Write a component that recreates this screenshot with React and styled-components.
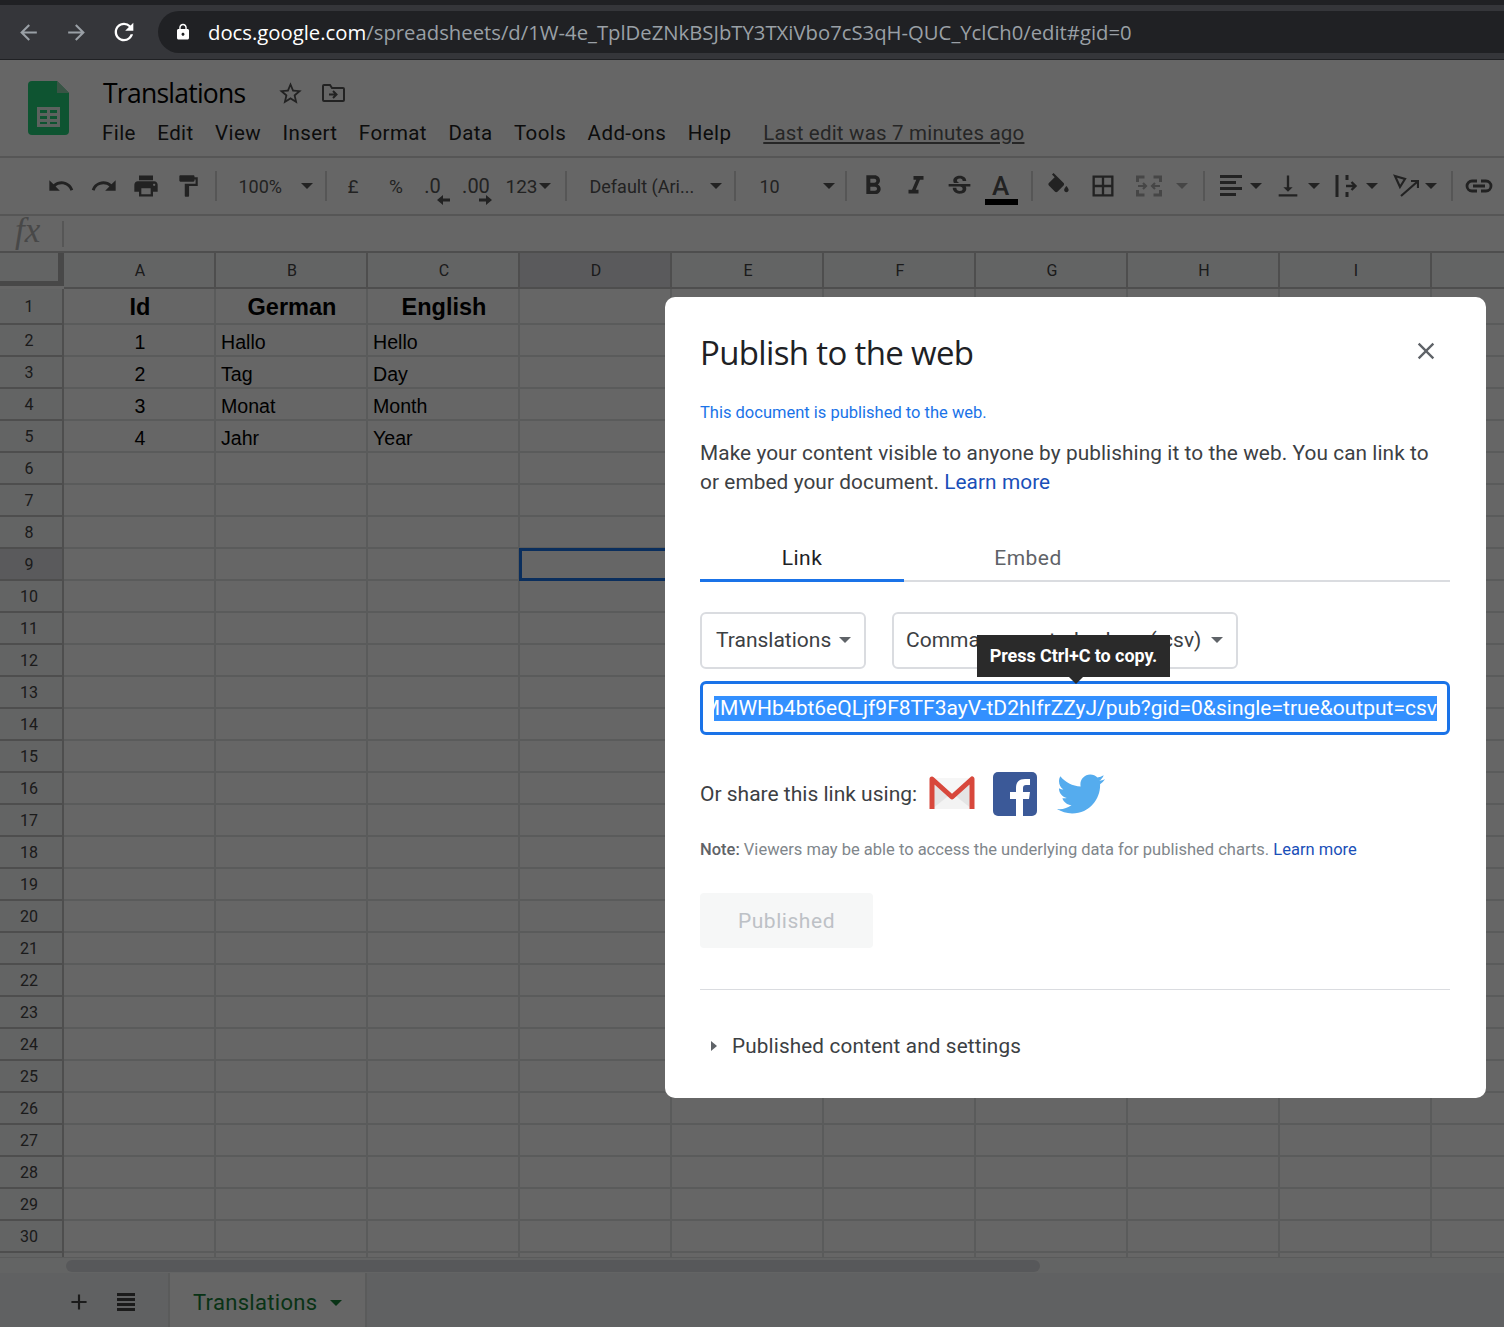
import React from 'react';
import styled, { createGlobalStyle } from 'styled-components';
import {
  MdArrowBack, MdArrowForward, MdRefresh, MdLock, MdUndo, MdRedo, MdPrint, MdFormatPaint,
  MdFormatBold, MdFormatItalic, MdStrikethroughS, MdBorderAll,
  MdVerticalAlignBottom, MdStarBorder, MdClose, MdAdd,
} from 'react-icons/md';
import { FaTwitter } from 'react-icons/fa';

const GlobalStyle = createGlobalStyle`
html, body { margin: 0; padding: 0; background: #666; overflow: hidden; }
* { box-sizing: border-box; }
`;

const Page = styled.div`
position: relative;
width: 1504px;
height: 1327px;
overflow: hidden;
display: flex;
flex-direction: column;
font-family: Roboto, sans-serif;
`;

/* browser chrome */
const BrowserBar = styled.div`
height: 60px;
flex-shrink: 0;
background: #35363a;
border-top: 5px solid #202124;
border-bottom: 1px solid #202124;
display: flex;
align-items: center;
padding-left: 4px;
`;
const NavButton = styled.div`
width: 48px;
display: flex;
justify-content: center;
color: ${(props) => props.color};
margin-left: ${(props) => props.$ml || 0}px;
`;
const UrlPill = styled.div`
flex: 1;
height: 42px;
margin-left: 10px;
background: #202124;
border-radius: 21px 0 0 21px;
display: flex;
align-items: center;
padding-left: 16px;
font-family: 'Open Sans', Roboto, sans-serif;
font-size: 20.3px;
color: #9aa0a6;
white-space: nowrap;
`;
const UrlHost = styled.span`
color: #fff;
margin-left: 16px;
`;

/* sheets header */
const DocHeader = styled.div`
height: 98px;
flex-shrink: 0;
background: #fff;
border-bottom: 2px solid #d8d8d8;
display: flex;
padding: 21px 0 0 28px;
`;
const DocTitleBlock = styled.div`
margin-left: 33px;
display: flex;
flex-direction: column;
`;
const TitleRow = styled.div`
display: flex;
align-items: center;
height: 24px;
margin-left: 1px;
`;
const DocTitle = styled.div`
font-family: 'Open Sans', Roboto, sans-serif;
font-size: 26.5px;
letter-spacing: -0.75px;
color: #000;
width: 174px;
`;
const MenuRow = styled.div`
display: flex;
align-items: center;
gap: 21.4px;
margin-top: 16px;
font-size: 20.5px;
letter-spacing: 0.42px;
color: #222;
`;
const LastEdit = styled.div`
margin-left: 10.5px;
color: #5f5f5f;
text-decoration: underline;
letter-spacing: 0.2px;
`;

/* toolbar */
const Toolbar = styled.div`
height: 58px;
flex-shrink: 0;
background: #fff;
border-bottom: 2px solid #d8d8d8;
display: flex;
align-items: center;
padding-left: 40px;
color: #555;
`;
const ToolButton = styled.div`
position: relative;
width: ${(props) => props.$w || 42.5}px;
height: 32px;
margin-left: ${(props) => props.$ml || 0}px;
display: flex;
align-items: center;
justify-content: center;
flex-shrink: 0;
font-size: ${(props) => props.$fs || 19}px;
font-weight: ${(props) => props.$fw || 400};
color: #555;
`;
const ToolSelect = styled.div`
width: ${(props) => props.$w}px;
padding: 0 ${(props) => props.$pr}px 0 ${(props) => props.$pl}px;
height: 32px;
display: flex;
align-items: center;
justify-content: space-between;
flex-shrink: 0;
font-size: 18px;
color: #555;
`;
const Sep = styled.div`
width: 2px;
height: 30px;
flex-shrink: 0;
background: #d8d8d8;
margin-left: ${(props) => props.$ml || 0}px;
`;
const Caret = styled.span`
width: 0;
height: 0;
flex-shrink: 0;
border-left: ${(props) => props.$s || 6}px solid transparent;
border-right: ${(props) => props.$s || 6}px solid transparent;
border-top: ${(props) => props.$s || 6}px solid ${(props) => props.color || '#555'};
margin-left: ${(props) => props.$ml || 0}px;
`;
const ColorBar = styled.div`
position: absolute;
left: 5px;
right: 4px;
bottom: -3px;
height: 6px;
background: #000;
`;
const DecimalArrow = styled.svg`
position: absolute;
bottom: -3px;
right: ${(props) => props.$r}px;
`;

/* formula bar */
const FormulaBar = styled.div`
height: 37px;
flex-shrink: 0;
background: #fff;
border-bottom: 2px solid #c4c4c4;
display: flex;
align-items: center;
`;
const FxLabel = styled.div`
width: 64px;
padding-left: 15px;
font-family: 'Liberation Serif', serif;
font-style: italic;
font-size: 35px;
color: #b4b4b4;
border-right: 2px solid #d8d8d8;
height: 26px;
line-height: 19px;
`;

/* grid */
const Grid = styled.div`
height: 1004px;
flex-shrink: 0;
overflow: hidden;
background: #fff;
`;
const GridRow = styled.div`
display: grid;
grid-template-columns: 64px repeat(10, 152px);
height: ${(props) => props.$h}px;
`;
const Corner = styled.div`
background: #f8f9fa;
border-right: 6px solid #b4b4b4;
border-bottom: 5px solid #b4b4b4;
height: 33px;
`;
const ColHeader = styled.div`
background: ${(props) => props.$active ? '#e0e2e6' : '#f8f9fa'};
border-right: 2px solid #c4c4c4;
border-bottom: 2px solid #c4c4c4;
display: flex;
align-items: center;
justify-content: center;
padding: 1px 0 0 2px;
font-size: 16px;
color: #444;
`;
const RowHeader = styled.div`
background: ${(props) => props.$active ? '#e0e2e6' : '#f8f9fa'};
border-right: 2px solid #c4c4c4;
border-bottom: 2px solid #c4c4c4;
display: flex;
align-items: center;
justify-content: center;
padding: 1px 4px 0 0;
font-size: 16px;
color: #444;
`;
const Cell = styled.div`
position: relative;
border-right: 2px solid #e2e3e3;
border-bottom: 2px solid #e2e3e3;
display: flex;
align-items: center;
padding: ${(props) => props.$bold ? 3 : 5}px 5px 0 ${(props) => props.$center ? 7 : 5}px;
font-family: 'Liberation Sans', Arial, sans-serif;
font-size: ${(props) => props.$bold ? 23.5 : 19.6}px;
font-weight: ${(props) => props.$bold ? 700 : 400};
justify-content: ${(props) => props.$center ? 'center' : 'flex-start'};
color: #000;
`;
const SelectedCell = styled.div`
position: absolute;
inset: -1px -2px -2px -1px;
border: 3px solid #1a73e8;
`;
const ScrollRow = styled.div`
height: 16px;
flex-shrink: 0;
background: #f8f9fa;
border-top: 1px solid #e2e3e3;
padding: 2px 0 0 66px;
`;
const ScrollThumb = styled.div`
width: 974px;
height: 12px;
border-radius: 6px;
background: #dadce0;
`;
const TabBar = styled.div`
flex: 1;
background: #f1f3f4;
display: flex;
align-items: stretch;
padding-left: 60px;
color: #444;
`;
const TabIcon = styled.div`
width: 37px;
margin-left: ${(props) => props.$ml || 0}px;
display: flex;
align-items: center;
justify-content: center;
padding-top: 4px;
`;
const SheetTab = styled.div`
margin-left: 24px;
width: 199px;
background: #fff;
border-left: 2px solid #e2e3e3;
border-right: 2px solid #e2e3e3;
display: flex;
align-items: center;
padding: 5px 0 0 23px;
gap: 13px;
font-size: 22px;
letter-spacing: 0.3px;
color: #188038;
`;

/* dialog */
const Overlay = styled.div`
position: absolute;
left: 0;
right: 0;
top: 60px;
bottom: 0;
background: rgba(0, 0, 0, 0.6);
`;
const Dialog = styled.div`
position: absolute;
left: 665px;
top: 297px;
width: 821px;
height: 801px;
background: #fff;
border-radius: 10px;
padding: 0 36px 0 35px;
display: flex;
flex-direction: column;
color: #3c4043;
`;
const DialogHead = styled.div`
display: flex;
align-items: center;
justify-content: space-between;
height: 38px;
margin-top: 36px;
`;
const DialogTitle = styled.div`
font-family: 'Open Sans', Roboto, sans-serif;
font-size: 33px;
letter-spacing: -0.65px;
color: #202124;
`;
const CloseBtn = styled.div`
display: flex;
margin: -2px 10px 0 0;
color: #5f6368;
`;
const PublishedNote = styled.div`
margin-top: 32px;
height: 20px;
line-height: 20px;
font-size: 16.5px;
color: #1a73e8;
`;
const Lead = styled.div`
margin-top: 16px;
font-size: 20.8px;
line-height: 29px;
letter-spacing: 0.08px;
color: #3c4043;
`;
const LinkText = styled.span`
color: ${(props) => props.color || '#1a4fb8'};
`;
const Tabs = styled.div`
margin-top: 37px;
height: 48px;
display: flex;
border-bottom: 2px solid #dadce0;
`;
const Tab = styled.div`
width: ${(props) => props.$w}px;
height: 48px;
display: flex;
align-items: center;
justify-content: center;
font-size: 21px;
letter-spacing: 0.45px;
color: ${(props) => props.$active ? '#202124' : '#5f6368'};
border-bottom: 3px solid ${(props) => props.$active ? '#1a73e8' : 'transparent'};
padding-top: 3px;
`;
const SelectRow = styled.div`
margin-top: 30px;
display: flex;
gap: 26px;
`;
const DropDown = styled.div`
width: ${(props) => props.$w}px;
height: 57px;
border: 2px solid #dadce0;
border-radius: 6px;
display: flex;
align-items: center;
justify-content: space-between;
padding: 0 13px 2px ${(props) => props.$pl}px;
font-size: 21px;
color: #3c4043;
white-space: nowrap;
`;
const Tooltip = styled.div`
position: absolute;
left: 312px;
top: 338px;
width: 193px;
height: 42px;
padding-bottom: 1px;
background: #2a2a2a;
color: #fff;
font-size: 18px;
font-weight: 700;
letter-spacing: -0.07px;
display: flex;
align-items: center;
justify-content: center;
&::after {
  content: '';
  position: absolute;
  left: 92px;
  top: 42px;
  border-left: 7px solid transparent;
  border-right: 7px solid transparent;
  border-top: 7px solid #2a2a2a;
}
`;
const LinkBox = styled.div`
margin-top: 12px;
height: 54px;
border: 3px solid #1a73e8;
border-radius: 6px;
padding: 0 10px 0 11px;
display: flex;
align-items: center;
justify-content: flex-end;
overflow: hidden;
`;
const SelectedUrl = styled.div`
height: 25px;
line-height: 25px;
width: 100%;
display: flex;
justify-content: flex-end;
overflow: hidden;
white-space: nowrap;
background: #3390ff;
color: #fff;
font-size: 21px;
`;
const ShareRow = styled.div`
margin-top: 36px;
height: 45px;
display: flex;
align-items: center;
font-size: 21px;
color: #3c4043;
`;
const ShareIcon = styled.div`
display: flex;
margin-left: ${(props) => props.$ml}px;
`;
const Note = styled.div`
margin-top: 24px;
height: 20px;
line-height: 20px;
font-size: 16.5px;
color: #80868b;
`;
const NoteLabel = styled.b`
font-weight: 500;
color: #5f6368;
`;
const PublishedButton = styled.div`
margin-top: 33px;
width: 173px;
height: 55px;
border-radius: 4px;
background: #f6f7f7;
color: #bdc1c6;
display: flex;
align-items: center;
justify-content: center;
font-size: 21px;
letter-spacing: 0.55px;
`;
const Divider = styled.div`
margin-top: 41px;
height: 1px;
background: #dadce0;
`;
const Disclosure = styled.div`
margin-top: 44px;
display: flex;
align-items: center;
font-size: 20.7px;
letter-spacing: 0.15px;
color: #3c4043;
padding-left: 11px;
gap: 15px;
`;
const SideCaret = styled.span`
width: 0;
height: 0;
border-top: 5px solid transparent;
border-bottom: 5px solid transparent;
border-left: 6px solid #5f6368;
`;

const COLS = ['A', 'B', 'C', 'D', 'E', 'F', 'G', 'H', 'I', ''];
const DATA = [
  ['1', 'Hallo', 'Hello'],
  ['2', 'Tag', 'Day'],
  ['3', 'Monat', 'Month'],
  ['4', 'Jahr', 'Year'],
];
const MENU = ['File', 'Edit', 'View', 'Insert', 'Format', 'Data', 'Tools', 'Add-ons', 'Help'];

const SheetsLogo = () => (
  <svg width="41" height="54" viewBox="0 0 41 54">
    <path d="M4 0h25l12 12v38a4 4 0 0 1-4 4H4a4 4 0 0 1-4-4V4a4 4 0 0 1 4-4z" fill="#23d27c" />
    <path d="M29 0l12 12H29z" fill="#8ed1ad" />
    <path d="M9 26h23v20H9zm3 3v3h7v-3zm10 0v3h7v-3zm-10 6v3h7v-3zm10 0v3h7v-3zm-10 6v2h7v-2zm10 0v2h7v-2z" fill="#e8f5ee" fillRule="evenodd" />
  </svg>
);
const FolderMove = () => (
  <svg width="24" height="20" viewBox="0 0 24 20" fill="none" stroke="#555" strokeWidth="2">
    <path d="M1 3a1 1 0 0 1 1-1h6l2 3h11a1 1 0 0 1 1 1v11a1 1 0 0 1-1 1H2a1 1 0 0 1-1-1z" />
    <path d="M7 11.5h7M11 8l3.5 3.5L11 15" strokeWidth="2" />
  </svg>
);
const FillIcon = () => (
  <svg width="27" height="27" viewBox="0 0 24 24" fill="#555">
    <path d="M16.56 8.94L7.62 0 6.21 1.41l2.38 2.38-5.15 5.15c-.59.59-.59 1.54 0 2.12l5.5 5.5c.29.29.68.44 1.06.44s.77-.15 1.06-.44l5.5-5.5c.59-.58.59-1.53 0-2.12z" />
    <path d="M19 11.5s-2 2.17-2 3.5c0 1.1.9 2 2 2s2-.9 2-2c0-1.33-2-3.5-2-3.5z" />
  </svg>
);
const AlignIcon = () => (
  <svg width="22" height="22" viewBox="0 0 22 22" fill="#555">
    <path d="M0 0h22v3H0zM0 6h16v3H0zM0 12h22v3H0zM0 18h16v3H0z" />
  </svg>
);
const MergeIcon = () => (
  <svg width="26" height="22" viewBox="0 0 26 22" fill="none" stroke="#b0b0b0" strokeWidth="3">
    <path d="M1.500 7V2h7M17.500 2h7v5M1.500 15v5h7M17.500 20h7v-5" />
    <path d="M2 11h8M7 8l3 3-3 3M24 11h-8M19 8l-3 3 3 3" strokeWidth="2.200" />
  </svg>
);
const WrapIcon = () => (
  <svg width="24" height="24" viewBox="0 0 24 24" fill="none" stroke="#555" strokeWidth="3">
    <path d="M3 1v22M13 1v5M13 18v5" />
    <path d="M12 12h9M17.500 8l4 4-4 4" strokeWidth="2.400" />
  </svg>
);
const RotateIcon = () => (
  <svg width="26" height="24" viewBox="0 0 26 24" fill="none" stroke="#555" strokeWidth="2.200">
    <path d="M2 2l10 3-5 8zM8 22L24 8M18 7h7v7" />
  </svg>
);
const LinkIcon = () => (
  <svg width="28" height="14" viewBox="0 0 28 14" fill="none" stroke="#555" strokeWidth="2.800">
    <path d="M12 2H7a5 5 0 0 0 0 10h5M16 2h5a5 5 0 0 1 0 10h-5M8 7h12" />
  </svg>
);
const SheetListIcon = () => (
  <svg width="20" height="18" viewBox="0 0 20 18" fill="#444">
    <path d="M1 0h18v3H1zM1 5h18v3H1zM1 10h18v3H1zM1 15h18v3H1z" />
  </svg>
);
const GmailIcon = () => (
  <svg width="46" height="35" viewBox="0 0 46 35">
    <path d="M3 2h40v31H3z" fill="#e4e4e4" />
    <path d="M3 33L23 17l20 16z" fill="#f3f3f3" />
    <path d="M3 2l20 17L43 2" fill="#f6f6f6" />
    <path d="M3 33V3l20 18L43 3v30" fill="none" stroke="#d8483c" strokeWidth="5" strokeLinejoin="round" />
  </svg>
);
const FacebookIcon = () => (
  <svg width="44" height="44" viewBox="0 0 44 44">
    <rect width="44" height="44" rx="5" fill="#3b5998" />
    <path d="M30 44V27h6l1-7h-7v-4c0-2 1-3 3-3h4V7h-5c-6 0-9 3-9 9v4h-6v7h6v17z" fill="#fff" />
  </svg>
);

const App = () => {
  const rows = [];
  for (let n = 1; n <= 31; n++) {
    const values = DATA[n - 2];
    rows.push(
      <GridRow key={n} $h={n === 1 ? 36 : 32}>
        <RowHeader $active={n === 9}>{n < 31 ? n : ''}</RowHeader>
        {COLS.map((c, i) => (
          <Cell
            key={i}
            $bold={n === 1}
            $center={n === 1 || (values && i === 0)}
          >
            {n === 1 ? ['Id', 'German', 'English'][i] : values ? values[i] : ''}
            {n === 9 && c === 'D' ? <SelectedCell /> : null}
          </Cell>
        ))}
      </GridRow>
    );
  }

  return (
    <Page>
      <GlobalStyle />
      <BrowserBar>
        <NavButton color="#9aa0a6"><MdArrowBack size={25} /></NavButton>
        <NavButton color="#9aa0a6"><MdArrowForward size={25} /></NavButton>
        <NavButton color="#fff"><MdRefresh size={28} /></NavButton>
        <UrlPill>
          <MdLock size={18} color="#fff" />
          <UrlHost>docs.google.com</UrlHost>/spreadsheets/d/1W-4e_TplDeZNkBSJbTY3TXiVbo7cS3qH-QUC_YclCh0/edit#gid=0
        </UrlPill>
      </BrowserBar>

      <DocHeader>
        <SheetsLogo />
        <DocTitleBlock>
          <TitleRow>
            <DocTitle>Translations</DocTitle>
            <MdStarBorder size={27} color="#555" />
            <NavButton $ml={6} color="#555"><FolderMove /></NavButton>
          </TitleRow>
          <MenuRow>
            {MENU.map((m) => <div key={m}>{m}</div>)}
            <LastEdit>Last edit was 7 minutes ago</LastEdit>
          </MenuRow>
        </DocTitleBlock>
      </DocHeader>

      <Toolbar>
        <ToolButton><MdUndo size={28} /></ToolButton>
        <ToolButton><MdRedo size={28} /></ToolButton>
        <ToolButton><MdPrint size={28} /></ToolButton>
        <ToolButton $w={41}><MdFormatPaint size={26} /></ToolButton>
        <Sep $ml={6} />
        <ToolSelect $w={108} $pl={22} $pr={12}>100%<Caret /></ToolSelect>
        <Sep />
        <ToolButton $w={43} $ml={5}>£</ToolButton>
        <ToolButton $w={43}>%</ToolButton>
        <ToolButton $w={30} $fs={20}>
          .0
          <DecimalArrow $r={-2} width="13" height="10" viewBox="0 0 13 10"><path d="M13 3.5H6V0L0 5l6 5V6.5h7z" fill="#555" /></DecimalArrow>
        </ToolButton>
        <ToolButton $w={57} $fs={20}>
          .00
          <DecimalArrow $r={13} width="13" height="10" viewBox="0 0 13 10"><path d="M0 3.5h7V0l6 5-6 5V6.5H0z" fill="#555" /></DecimalArrow>
        </ToolButton>
        <ToolButton $w={47}>123<Caret $ml={1} /></ToolButton>
        <Sep $ml={13} />
        <ToolSelect $w={167} $pl={23} $pr={12}>Default (Ari...<Caret /></ToolSelect>
        <Sep />
        <ToolSelect $w={109} $pl={24} $pr={10}>10<Caret /></ToolSelect>
        <Sep />
        <ToolButton $w={40} $ml={6}><MdFormatBold size={32} /></ToolButton>
        <ToolButton $w={46}><MdFormatItalic size={30} /></ToolButton>
        <ToolButton $w={41}><MdStrikethroughS size={29} /></ToolButton>
        <ToolButton $w={42} $fs={26} $fw={500}>A<ColorBar /></ToolButton>
        <Sep $ml={9} />
        <ToolButton $w={52}><FillIcon /></ToolButton>
        <ToolButton $w={37}><MdBorderAll size={28} /></ToolButton>
        <ToolButton $w={54}><MergeIcon /></ToolButton>
        <Caret color="#b0b0b0" />
        <Sep $ml={15} />
        <ToolButton $w={32} $ml={10}><AlignIcon /></ToolButton>
        <Caret $ml={3} />
        <ToolButton $w={32} $ml={10}><MdVerticalAlignBottom size={28} /></ToolButton>
        <Caret $ml={4} />
        <ToolButton $w={32} $ml={10}><WrapIcon /></ToolButton>
        <Caret $ml={4} />
        <ToolButton $w={32} $ml={12}><RotateIcon /></ToolButton>
        <Caret $ml={3} />
        <Sep $ml={14} />
        <ToolButton $w={52}><LinkIcon /></ToolButton>
      </Toolbar>

      <FormulaBar><FxLabel>fx</FxLabel></FormulaBar>

      <Grid>
        <GridRow $h={36}>
          <Corner />
          {COLS.map((c, i) => <ColHeader key={i} $active={c === 'D'}>{c}</ColHeader>)}
        </GridRow>
        {rows}
      </Grid>

      <ScrollRow><ScrollThumb /></ScrollRow>
      <TabBar>
        <TabIcon><MdAdd size={26} /></TabIcon>
        <TabIcon $ml={10}><SheetListIcon /></TabIcon>
        <SheetTab>Translations<Caret color="#188038" /></SheetTab>
      </TabBar>

      <Overlay />

      <Dialog>
        <DialogHead>
          <DialogTitle>Publish to the web</DialogTitle>
          <CloseBtn><MdClose size={28} /></CloseBtn>
        </DialogHead>
        <PublishedNote>This document is published to the web.</PublishedNote>
        <Lead>
          Make your content visible to anyone by publishing it to the web. You can link to
          or embed your document. <LinkText>Learn more</LinkText>
        </Lead>
        <Tabs>
          <Tab $active $w={204}>Link</Tab>
          <Tab $w={248}>Embed</Tab>
        </Tabs>
        <SelectRow>
          <DropDown $w={166} $pl={14}>Translations<Caret color="#5f6368" /></DropDown>
          <DropDown $w={346} $pl={12}>Comma-separated values (.csv)<Caret color="#5f6368" /></DropDown>
        </SelectRow>
        <LinkBox>
          <SelectedUrl>MMWHb4bt6eQLjf9F8TF3ayV-tD2hIfrZZyJ/pub?gid=0&amp;single=true&amp;output=csv</SelectedUrl>
        </LinkBox>
        <Tooltip>Press Ctrl+C to copy.</Tooltip>
        <ShareRow>
          Or share this link using:
          <ShareIcon $ml={12}><GmailIcon /></ShareIcon>
          <ShareIcon $ml={18}><FacebookIcon /></ShareIcon>
          <ShareIcon $ml={20}><FaTwitter size={48} color="#55acee" /></ShareIcon>
        </ShareRow>
        <Note>
          <NoteLabel>Note:</NoteLabel> Viewers may be able to access the underlying data for published charts. <LinkText>Learn more</LinkText>
        </Note>
        <PublishedButton>Published</PublishedButton>
        <Divider />
        <Disclosure><SideCaret />Published content and settings</Disclosure>
      </Dialog>
    </Page>
  );
};

export default App;
